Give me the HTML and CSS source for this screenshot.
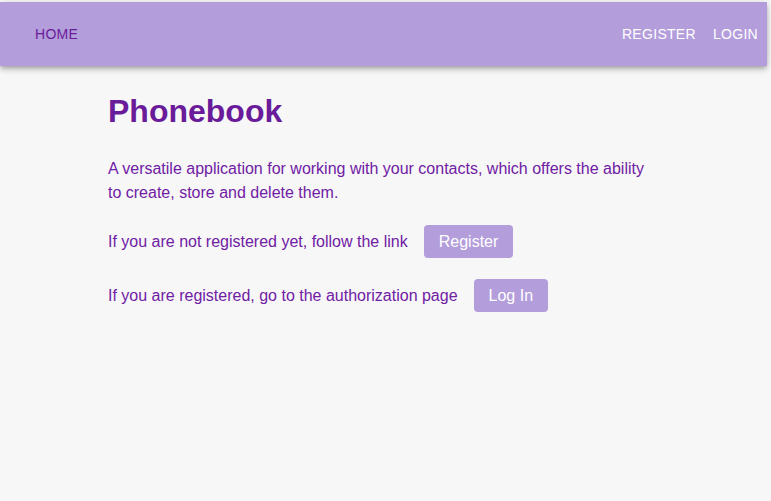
FILE: index.html
```html
<!DOCTYPE html>
<html lang="en">
<head>
<meta charset="utf-8">
<title>Phonebook</title>
<link rel="stylesheet" href="styles.css">
</head>
<body>
<div class="page">
  <header class="appbar">
    <nav class="nav-left"><a class="nav-link active" href="#">Home</a></nav>
    <nav class="nav-right">
      <a class="nav-link" href="#">Register</a>
      <a class="nav-link" href="#">Login</a>
    </nav>
  </header>
  <main class="content">
    <h1 class="title">Phonebook</h1>
    <p class="lead">A versatile application for working with your contacts, which offers the ability to create, store and delete them.</p>
    <div class="row">
      <span class="row-text">If you are not registered yet, follow the link</span>
      <a class="btn" href="#">Register</a>
    </div>
    <div class="row">
      <span class="row-text">If you are registered, go to the authorization page</span>
      <a class="btn" href="#">Log In</a>
    </div>
  </main>
</div>
</body>
</html>
```
FILE: styles.css
```css
html, body {
  margin: 0;
  padding: 0;
  background: #f7f7f7;
}
body {
  font-family: "Liberation Sans", Arial, sans-serif;
  color: #6a1b9a;
}
.page {
  padding-top: 2px;
  background: #f7f7f7;
  min-height: 499px;
}
.appbar {
  height: 64px;
  margin-right: 4px;
  background: #b39ddb;
  display: flex;
  align-items: center;
  justify-content: space-between;
  box-shadow: 0 2px 4px -1px rgba(0,0,0,0.2), 0 4px 5px 0 rgba(0,0,0,0.14), 0 1px 10px 0 rgba(0,0,0,0.12);
}
.nav-left {
  padding-left: 35px;
  display: flex;
}
.nav-right {
  display: flex;
  gap: 17px;
  padding-right: 9px;
}
.nav-link {
  font-family: "Liberation Sans", Arial, sans-serif;
  font-size: 14px;
  letter-spacing: 0.3px;
  text-transform: uppercase;
  text-decoration: none;
  color: #ffffff;
}
.nav-link.active {
  color: #6a1b9a;
}
.content {
  padding: 0 108px;
}
.title {
  margin: 26px 0 0;
  font-size: 32px;
  line-height: 38px;
  font-weight: bold;
  color: #6a1b9a;
}
.lead {
  max-width: 545px;
  margin: 27px 0 0;
  font-size: 16px;
  line-height: 24px;
  color: #7020a4;
}
.row {
  display: flex;
  align-items: center;
  gap: 16px;
  margin-top: 20px;
  font-size: 16px;
  color: #7020a4;
}
.row + .row {
  margin-top: 21px;
}
.btn {
  display: inline-block;
  background: #b39ddb;
  color: #ffffff;
  text-decoration: none;
  font-size: 16px;
  line-height: 21px;
  padding: 6px 15px;
  border-radius: 4px;
}
```
